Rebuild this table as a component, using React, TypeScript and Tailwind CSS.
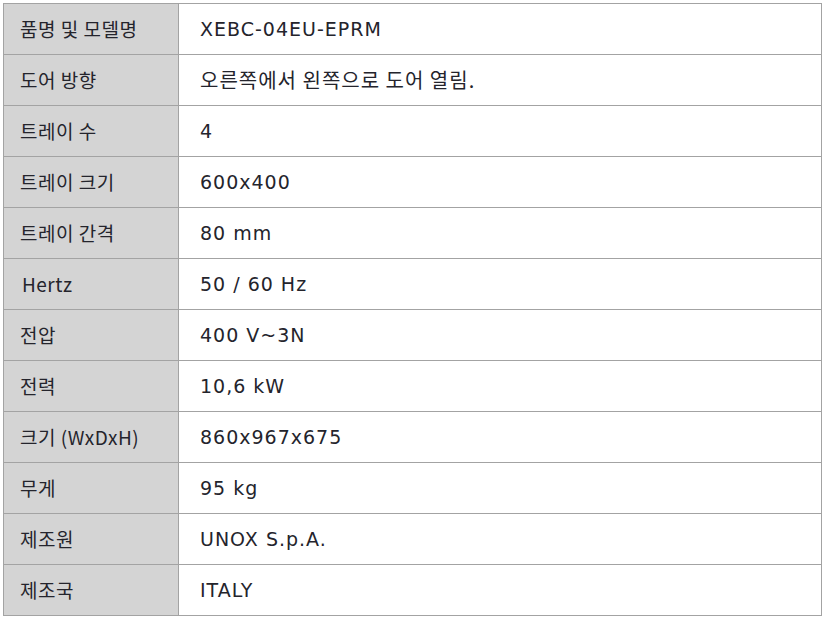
import React from "react";

const rows: [string, string][] = [
  ["품명 및 모델명", "XEBC-04EU-EPRM"],
  ["도어 방향", "오른쪽에서 왼쪽으로 도어 열림."],
  ["트레이 수", "4"],
  ["트레이 크기", "600x400"],
  ["트레이 간격", "80 mm"],
  ["Hertz", "50 / 60 Hz"],
  ["전압", "400 V~3N"],
  ["전력", "10,6 kW"],
  ["크기 (WxDxH)", "860x967x675"],
  ["무게", "95 kg"],
  ["제조원", "UNOX S.p.A."],
  ["제조국", "ITALY"],
];

const hasHangul = (s: string) => /[\uac00-\ud7a3]/.test(s);

export default function App() {
  return (
    <div className="w-[826px] h-[618px] bg-white pt-[3px] pl-[3px]">
      <div className="w-[819px] border-t border-l border-r border-[#a3a3a3] text-[#24242c]">
        {rows.map(([k, v], i) => (
          <div key={i} className="grid grid-cols-[175px_1fr] h-[51px] border-b border-[#a3a3a3]">
            <div
              className="bg-[#d4d4d4] border-r border-[#a3a3a3] flex items-center pl-[16px] text-[19px] tracking-[0.5px]"
              style={{ fontFamily: '"Noto Sans CJK KR", sans-serif' }}
            >
              <span className={k === "Hertz" ? "pl-[2px]" : ""}>{k}</span>
            </div>
            {hasHangul(v) ? (
              <div
                className="flex items-center pl-[21px] text-[20px] tracking-[1px]"
                style={{ fontFamily: '"Noto Sans CJK KR", sans-serif' }}
              >
                {v}
              </div>
            ) : (
              <div
                className="flex items-center pl-[21px] text-[19px] tracking-[1px]"
                style={{ fontFamily: '"DejaVu Sans", "Noto Sans CJK KR", sans-serif' }}
              >
                {v}
              </div>
            )}
          </div>
        ))}
      </div>
    </div>
  );
}
